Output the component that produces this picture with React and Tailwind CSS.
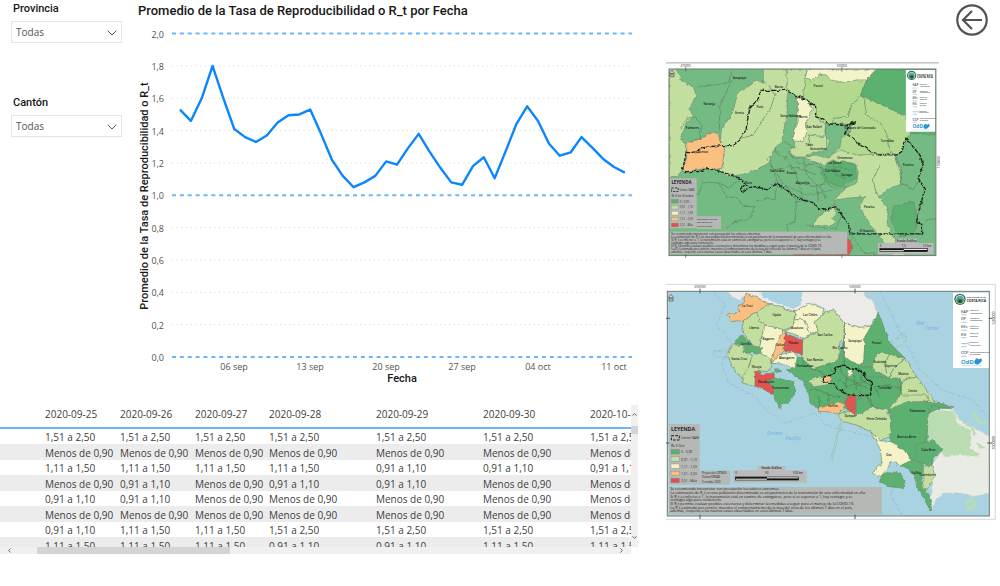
import { ChevronDown, ChevronLeft, ChevronRight, ChevronUp } from 'lucide-react';

const rt = [
  1.53, 1.46, 1.6, 1.8, 1.6, 1.41, 1.36, 1.33, 1.37, 1.45, 1.495, 1.5, 1.53, 1.38, 1.22, 1.12, 1.05, 1.08, 1.12, 1.21, 1.19,
  1.29, 1.38, 1.27, 1.17, 1.08, 1.065, 1.18, 1.235, 1.105, 1.27, 1.44, 1.55, 1.46, 1.32, 1.245, 1.265, 1.36, 1.295, 1.225, 1.175, 1.14,
];

const xTicks = ['06 sep', '13 sep', '20 sep', '27 sep', '04 oct', '11 oct'];
const yTicks = [0, 2, 4, 6, 8, 10, 12, 14, 16, 18, 20];

const M = 'Menos de 0,90';
const A = '0,91 a 1,10';
const B = '1,11 a 1,50';
const C = '1,51 a 2,50';

const dates = ['2020-09-25', '2020-09-26', '2020-09-27', '2020-09-28', '2020-09-29', '2020-09-30', '2020-10-01'];
const rows = [
  [C, C, C, C, C, C, C],
  [M, M, M, M, M, M, M],
  [B, B, B, B, A, A, A],
  [M, A, M, A, A, M, M],
  [A, A, M, M, M, M, M],
  [M, M, M, M, M, M, M],
  [A, B, B, C, C, C, C],
  [B, B, B, A, A, B, B],
];

const GREEN = '#74bb83';
const DARK = '#5bb06f';
const LIGHT = '#c3df9f';
const LIME = '#b3d98f';
const PALE = '#f4f3c8';
const ORANGE = '#fbc080';
const RED = '#e0524f';

const legend = [
  [DARK, '0 - 0,90'],
  [LIGHT, '0,91 - 1,10'],
  [PALE, '1,11 - 1,50'],
  [ORANGE, '1,51 - 2,50'],
  [RED, '2,51 - Máx'],
];

const notes = [
  'Se recomienda interpretar con precaución los valores extremos.',
  'La estimación de R_t en una población determinada es un parámetro de la transmisión de una enfermedad en ella.',
  'Si R_t es inferior a 1, la transmisión está en camino de extinguirse, pero si es superior a 1, hay contagio y se',
  'contagia algo para contenerlo.',
  'El R_t permite evaluar posibles escenarios y determinar las medidas a seguir para el manejo de la COVID-19.',
  'La R_t estimada por cantón, muestra el comportamiento de la tasa del virus de los últimos 7 días en el país,',
  'además, respecto a los nuevos casos observados en esos últimos 7 días.',
];

const gamRegions = [
  [LIGHT, '27,42 48,42 65,75 100,95 108,120 90,160 100,185 78,205 62,258 80,262 80,300 68,345 50,365 27,365'],
  [LIGHT, '310,42 440,42 470,60 512,90 520,205 505,240 510,290 480,306 400,306 385,285 345,275 340,305 325,325 290,345 250,358 205,365 180,350 195,275 180,265 185,220 215,180 235,110 265,95 290,75 310,85'],
  [LIME, '438,42 650,42 620,75 602,120 735,180 755,215 755,235 738,250 728,290 710,300 690,300 640,300 585,340 500,320 500,215 468,185 467,155 430,130'],
  [PALE, '438,42 655,42 625,75 590,75 550,82 510,75 500,60 478,58 455,75 438,68'],
  [DARK, '652,42 828,42 828,240 755,235 755,215 735,182 602,120 622,75'],
  [GREEN, '382,108 412,122 412,180 400,250 405,275 375,285 365,270 372,220 382,180'],
  [PALE, '412,130 428,128 450,140 457,165 440,200 440,235 430,260 400,258 402,225 415,200'],
  [GREEN, '497,205 575,208 570,230 545,250 540,275 505,310 480,318 440,300 500,285 510,260 495,240'],
  [GREEN, '345,275 370,262 395,272 385,290 410,310 470,305 520,330 575,305 600,330 600,390 440,420 350,380 330,310'],
  [DARK, '500,330 530,315 585,330 590,370 545,395 500,380 480,355'],
  [LIGHT, '430,305 470,300 500,308 540,285 590,300 705,296 720,350 725,385 690,400 655,425 685,460 680,500 705,560 740,602 700,602 640,520 600,460 605,440 615,425 560,430 530,435 518,455 528,430 555,400 590,385 595,350 585,325 520,318 490,330 465,322'],
  [LIGHT, '458,512 470,485 500,468 522,460 530,475 515,490 530,500 515,512'],
  [ORANGE, '80,265 110,255 150,235 175,235 180,265 195,275 190,310 185,340 160,345 140,340 75,350 68,345 80,310'],
  [DARK, '700,455 760,440 775,500 760,535 720,545 695,500'],
  [RED, '400,597 555,597 560,548 575,560 576,585 565,602 400,602'],
];

const gamLines = [
  '108,95 160,90 200,85 215,60 210,42', '215,72 200,110 180,150 178,230', '62,225 80,190 105,185 125,210 120,250 90,262',
  '303,75 325,90 345,120 330,165 300,205 280,240 245,250', '380,42 382,106', '345,275 355,300 375,310 390,300 410,320 440,330 480,325',
  '612,130 620,180 660,205 680,235 685,270 700,300', '602,120 575,150 565,185 520,190 518,208', '240,370 210,400 180,385 130,380 115,420 90,410 70,440',
  '180,385 200,430 230,425 250,455 285,455 270,490 225,500 200,520', '285,440 320,430 345,435 350,390', '385,405 410,440 440,435 460,445',
  '410,440 405,500 380,510 385,530', '320,310 345,350 375,390 405,425', '380,308 405,350 420,400 430,435', '430,310 440,360 470,390 475,440',
  '480,330 500,370 480,400 500,430', '520,320 525,360 560,370', '660,330 640,370 645,400 655,425', '705,300 725,345 725,385 760,405 780,370',
  '570,537 590,560 610,595 650,598', '785,510 800,495 828,490', '545,480 530,520 480,520 440,510', '450,270 445,240 490,245 500,215',
  '470,335 510,345 540,335 580,350', '430,385 460,395 500,385 530,400', '340,345 390,335 430,345 470,360',
];

const gamBorder =
  '78,292 90,293 110,290 130,278 150,275 190,272 215,272 235,262 258,225 265,180 270,160 295,130 303,106 380,106 412,125 430,130 455,145 467,155 467,185 485,192 510,207 560,212 590,200 572,205 555,235 580,250 600,270 650,300 710,300 725,290 738,250 755,270 780,300 790,330 775,370 795,400 785,440 770,500 788,512 785,537 570,537 565,505 545,480 530,455 480,465 465,445 430,435 405,425 380,405 350,385 325,405 285,395 265,398 250,412 240,402 258,392 240,370 190,352 165,345 140,340 120,350 75,350 68,345 72,325 78,292';

const gamPlaces = [
  [148, 150, 'Naranjo'], [238, 72, 'Sarapiquí'], [238, 176, 'Grecia'], [300, 158, 'Poás'], [97, 222, 'Palmares'], [130, 294, 'Atenas'],
  [357, 98, 'Barva'], [392, 185, 'Santa Bárbara'], [430, 190, 'Barva'], [463, 218, 'San Rafael'], [475, 97, 'Pococí'], [600, 223, 'Vázquez de Coronado'],
  [682, 260, 'Turrialba'], [745, 332, 'Paraíso'], [448, 272, 'Tibás'], [475, 284, 'Goicoechea'], [352, 350, 'Santa Ana'], [395, 356, 'Escazú'],
  [428, 386, 'Alajuelita'], [265, 388, 'Mora'], [555, 312, 'Oreamuno'], [525, 328, 'La Unión'], [518, 352, 'Curridabat'], [560, 362, 'Cartago'], [628, 460, 'Paraíso'], [620, 530, 'El Guarco'],
];

const countryRegions = [
  [DARK, '412,230 425,235 460,260 510,245 535,235 552,180 552,230 605,255 638,240 640,265 720,295 725,330 800,345 815,372 850,372 870,385 840,385 805,400 700,400 620,390 590,400 560,390 540,372 475,385 450,370 447,345 425,300 380,270 405,262'],
  [ORANGE, '258,40 285,50 330,72 320,85 290,95 275,105 250,125 235,122 215,125 200,105 240,95 232,82 248,70'],
  [LIGHT, '250,125 275,105 290,95 300,125 315,135 320,140 300,180 305,200 285,200 255,165 245,150'],
  [LIGHT, '290,95 330,72 405,95 400,140 370,150 315,135 300,125'],
  [PALE, '405,95 445,70 490,85 488,105 465,125 475,155 450,160 440,130 420,118 405,120'],
  [PALE, '405,120 425,118 440,135 455,165 430,175 395,160 375,155 400,140'],
  [LIGHT, '488,105 500,95 520,90 553,130 553,175 540,185 535,240 510,250 460,265 425,235 428,180 455,165 475,155 465,125'],
  [PALE, '315,135 368,148 355,190 335,240 310,235 298,205 305,175'],
  [ORANGE, '368,150 380,155 375,210 350,235 333,250 350,190'],
  [RED, '375,160 428,180 427,225 400,215 372,212'],
  [DARK, '245,165 265,180 285,200 305,205 300,218 250,218 255,195 218,190'],
  [LIGHT, '215,195 250,195 250,218 278,225 255,290 245,295 215,260 205,225'],
  [LIGHT, '278,225 300,220 330,235 335,260 325,275 290,272 285,320 245,308 250,290 265,265'],
  [DARK, '340,278 348,292 375,300 400,305 408,330 400,350 385,370 370,370 358,385 345,360 335,335 320,305'],
  [RED, '285,275 300,272 300,285 340,278 348,292 320,305 340,320 340,345 315,330 285,318'],
  [PALE, '335,250 355,225 400,215 412,230 405,265 365,252'],
  [PALE, '553,130 600,142 638,138 615,170 612,240 600,255 565,240 552,230'],
  [DARK, '638,130 655,98 675,150 690,190 735,235 670,218 635,260 600,260 612,240 615,170'],
  [LIGHT, '650,222 670,218 735,235 770,290 800,330 825,365 790,370 750,370 720,350 725,330 720,295 690,295 635,265'],
  [DARK, '600,290 720,295 720,350 705,372 690,400 640,380 600,350'],
  [LIGHT, '447,300 480,290 515,290 500,315 460,320'],
  [ORANGE, '490,292 510,286 516,295 508,306 490,305'],
  [PALE, '560,270 575,268 580,285 565,290'],
  [LIGHT, '705,365 720,345 800,345 805,363 740,368 690,395 695,375'],
  [DARK, '690,390 740,365 815,368 850,372 880,385 845,382 815,375 805,400 800,500 770,540 740,540 690,480'],
  [LIGHT, '540,400 590,390 630,380 680,390 695,420 690,470 660,482 630,455 590,435 550,425 535,410'],
  [ORANGE, '475,382 500,375 530,368 555,368 550,385 535,402 505,395 475,395'],
  [RED, '565,348 588,345 587,405 565,390 555,365'],
  [DARK, '588,360 620,350 635,380 600,402 588,400'],
  [PALE, '632,455 660,482 690,485 740,515 755,545 725,555 690,545 685,565 660,590 640,580 650,560 665,550 662,510'],
  [DARK, '765,495 820,480 848,510 820,535 815,560 770,545'],
  [DARK, '722,555 760,540 790,550 785,600 795,630 812,655 815,692 808,690 790,650 770,620 765,590 750,570'],
  [DARK, '662,585 690,575 720,580 735,600 730,625 690,620 660,605'],
  [LIGHT, '790,560 815,555 825,590 800,630 785,620 792,595'],
  [DARK, '343,267 355,266 362,275 348,277'],
];

const countryBorder =
  '490,292 510,286 520,280 530,262 552,255 565,262 580,268 590,265 610,280 620,298 635,305 632,345 600,347 565,345 540,330 520,312 490,305 490,292';

const countryLines = [
  '553,130 553,250', '425,235 440,260 470,268 500,290', '447,330 480,330 510,345 540,350', '470,345 480,365 475,385', '510,345 505,372',
  '540,250 545,280 570,300 600,310 630,300', '560,290 555,330', '580,285 590,330', '600,270 605,300 640,320 660,350', '640,320 690,315 720,325',
  '735,235 700,265 690,295', '770,290 730,300 720,330', '690,222 675,245 680,280', '500,250 515,275 530,262', '620,345 640,380', '535,300 560,318 590,312 625,325',
];

const countryPlaces = [
  [262, 82, 'La Cruz'], [350, 108, 'Upala'], [282, 146, 'Liberia'], [450, 108, 'Los Chiles'], [412, 146, 'Guatuso'], [495, 168, 'San Carlos'],
  [325, 180, 'Bagaces'], [360, 198, 'Cañas'], [400, 192, 'Tilarán'], [258, 194, 'Carrillo'], [238, 240, 'Santa Cruz'], [290, 265, 'Nicoya'],
  [380, 238, 'Abangares'], [435, 262, 'Puntarenas'], [585, 187, 'Sarapiquí'], [650, 193, 'Pococí'], [660, 250, 'Guácimo'], [692, 262, 'Siquirres'],
  [730, 286, 'Matina'], [758, 336, 'Limón'], [674, 326, 'Turrialba'], [362, 328, 'Puntarenas'], [318, 308, 'Nandayure'], [518, 380, 'Parrita'],
  [570, 410, 'Quepos'], [650, 420, 'Pérez Zeledón'], [772, 396, 'Talamanca'], [740, 473, 'Buenos Aires'], [805, 512, 'Coto Brus'], [686, 527, 'Osa'],
  [768, 582, 'Golfito'], [803, 588, 'Corredores'], [540, 206, 'Río Cuarto'], [465, 242, 'San Ramón'],
];

function Filter({ id, label }) {
  return (
    <div className="flex flex-col gap-1">
      <label htmlFor={id} className="pl-0.5 text-[11px] leading-4 font-medium text-neutral-900 font-['Roboto',sans-serif]">
        {label}
      </label>
      <div className="relative">
        <select
          id={id}
          className="block w-full h-[22px] pl-1 pr-5 appearance-none rounded-none border border-neutral-200 bg-white text-[10px] text-neutral-600"
        >
          <option>Todas</option>
        </select>
        <ChevronDown size={16} strokeWidth={1.5} className="absolute right-0.5 top-1 text-neutral-600 pointer-events-none" />
      </div>
    </div>
  );
}

function RtChart() {
  const y = v => 357 - v * 161.7;
  const line = rt.map((v, i) => `${180 + i * 10.85},${y(v)}`).join(' ');
  return (
    <svg viewBox="130 22 508 366" className="block w-full" role="img" aria-label="Tasa de reproducibilidad por fecha">
      {yTicks.map(t => (
        <g key={t}>
          <line
            x1="172" x2="632" y1={y(t / 10)} y2={y(t / 10)}
            stroke={t % 10 ? '#d0d0d0' : '#6bb5fb'}
            strokeWidth={t % 10 ? 1 : 2}
            strokeDasharray={t % 10 ? '1 3.7' : '4 3.87'}
          />
          <text x="164" y={y(t / 10) + 4} textAnchor="end" className="text-[9px] fill-neutral-600">
            {(t / 10).toFixed(1).replace('.', ',')}
          </text>
        </g>
      ))}
      {xTicks.map((t, i) => (
        <text key={t} x={234 + i * 76} y="370" textAnchor="middle" className="text-[9px] fill-neutral-600">{t}</text>
      ))}
      <polyline points={line} fill="none" stroke="#0d86fb" strokeWidth="2.4" strokeLinejoin="round" />
      <text x="402" y="382" textAnchor="middle" className="text-[11px] font-medium fill-neutral-900 font-['Roboto',sans-serif]">Fecha</text>
      <text
        transform="translate(148 196) rotate(-90)"
        textAnchor="middle"
        className="text-[11px] font-medium fill-neutral-900 font-['Roboto',sans-serif]"
      >
        Promedio de la Tasa de Reproducibilidad o R_t
      </text>
    </svg>
  );
}

function Matrix() {
  return (
    <div className="mt-[17px]">
      <div className="flex">
        <div className="flex-1 min-w-0 h-[142px] overflow-hidden">
          <table className="w-[700px] table-fixed border-collapse text-[10px] leading-[14px] text-neutral-700 whitespace-nowrap">
            <colgroup>
              <col className="w-[45px]" />
              <col className="w-[75px]" />
              <col className="w-[75px]" />
              <col className="w-[74px]" />
              <col className="w-[107px]" />
              <col className="w-[107px]" />
              <col className="w-[107px]" />
              <col className="w-[110px]" />
            </colgroup>
            <thead>
              <tr className="h-[23px] border-b-2 border-[#6bb5fb]">
                <td />
                {dates.map(d => (
                  <th key={d} scope="col" className="p-0 pb-1 text-left font-normal">{d}</th>
                ))}
              </tr>
            </thead>
            <tbody>
              {rows.map((r, i) => (
                <tr key={i} className={i % 2 ? 'h-4 bg-[#ececec]' : 'h-[15px]'}>
                  <td className="p-0" />
                  {r.map((c, j) => (
                    <td key={j} className={i % 2 ? 'p-0 pt-0.5' : 'p-0 pt-px'}>{c}</td>
                  ))}
                </tr>
              ))}
            </tbody>
          </table>
        </div>
        <div className="w-[7px] flex flex-col justify-between bg-[#f0f0f0] text-neutral-600">
          <div>
            <button aria-label="Subir" className="block pt-1.5"><ChevronUp size={7} strokeWidth={3} /></button>
            <div className="mt-2 h-2 bg-neutral-300" />
          </div>
          <button aria-label="Bajar" className="block pb-1.5"><ChevronDown size={7} strokeWidth={3} /></button>
        </div>
      </div>
      <div className="mr-[7px] h-[7px] flex items-center bg-[#f0f0f0] text-neutral-600">
        <button aria-label="Izquierda" className="w-[37px] pl-1.5"><ChevronLeft size={7} strokeWidth={3} /></button>
        <div className="w-[193px] h-full bg-neutral-300" />
        <button aria-label="Derecha" className="ml-auto pr-1.5"><ChevronRight size={7} strokeWidth={3} /></button>
      </div>
    </div>
  );
}

// roughens the region outlines so that borders and coasts look natural
function Terrain({ id }) {
  return (
    <filter id={id} x="0" y="0" width="100%" height="100%">
      <feTurbulence type="fractalNoise" baseFrequency="0.07" numOctaves="2" seed="4" />
      <feDisplacementMap in="SourceGraphic" scale="11" xChannelSelector="R" yChannelSelector="G" />
    </filter>
  );
}

function Places({ items }) {
  return items.map(([x, y, name]) => (
    <text key={`${name}-${x}`} x={x} y={y} textAnchor="middle" className="text-[9px] font-semibold fill-neutral-900">{name}</text>
  ));
}

function Frame({ x, y, w, h }) {
  return <rect x={x} y={y} width={w} height={h} fill="none" stroke="#6b7a72" strokeWidth="3" />;
}

function House({ x, y }) {
  return (
    <g transform={`translate(${x} ${y})`} stroke="#444" strokeWidth="2" fill="#cfd6cf">
      <path d="M0 8 6 1l6 7v13H0Z" />
      <path d="M3 17v-7l3 4 3-4v7" fill="none" />
    </g>
  );
}

function Institutions({ x, y, scale }) {
  const items = [
    ['EAP', 'Escuela de', 'Administración', 50], ['IIP', 'Instituto de', 'Investigaciones', 73], ['EEs', 'Escuela de', 'Estadística', 97],
    ['EG', 'Escuela de', 'Geografía', 119], ['', 'Escuela de', 'Salud Pública', 146], ['CCP', 'Centro Centroamericano', 'de Población', 175],
  ];
  return (
    <g transform={`translate(${x} ${y}) scale(${scale})`}>
      <rect width="107" height="226" fill="#fff" />
      <circle cx="21" cy="20" r="17" fill="#3c7150" />
      <circle cx="21" cy="20" r="13" fill="#e6eee6" />
      <circle cx="21" cy="20" r="11" fill="#5aa6c9" />
      <path d="M10 23c5-8 9-9 12-3 3-4 7-3 10 2-2 7-6 10-11 10s-9-3-11-9Z" fill="#3f9a51" />
      <path d="M15 27c2-8 9-9 13-2l-4 6h-6Z" fill="#314b36" />
      <text x="41" y="17" className="text-[7px] font-bold fill-neutral-700">UNIVERSIDAD DE</text>
      <text x="41" y="28" className="text-[10px] font-bold fill-neutral-800">COSTA RICA</text>
      {items.map(([abbr, a, b, top]) => (
        <g key={top}>
          <text x="24" y={top + 10} className="text-[12px] font-semibold fill-neutral-600">{abbr}</text>
          <line x1="25" x2="41" y1={top + 16} y2={top + 16} stroke="#72b6df" strokeWidth="2" />
          <text x="51" y={top + 6} className="text-[5px] font-semibold fill-neutral-700">{a}</text>
          <text x="51" y={top + 13} className="text-[5px] font-semibold fill-neutral-700">{b}</text>
        </g>
      ))}
      <path d="M25 153h20M48 149v9" stroke="#8a8f94" strokeWidth="2" />
      <text x="24" y="214" className="text-[18px] font-bold fill-[#3b96c8]">OdD</text>
      <path d="M64 205l6-8 8 3 7-3 2 7-6 8-8 4-8-3Z" fill="#2b93cf" />
      <line x1="24" x2="86" y1="219" y2="219" stroke="#9bc5de" strokeWidth="1.5" />
    </g>
  );
}

function Legend({ x, y, w, h, step, date }) {
  const s = step / 21.5;
  return (
    <g>
      <rect x={x} y={y} width={w} height={h} fill="#b6b8b6" />
      <rect x={x + w - 1} y={y + h - (s > 0.9 ? 42 : 36)} width={s > 0.9 ? 93 : 74} height={s > 0.9 ? 42 : 38} fill="#b6b8b6" />
      <g transform={`translate(${x} ${y}) scale(${s})`}>
        <text x="5" y="20" className="text-[16px] font-bold fill-neutral-800">LEYENDA</text>
        <rect x="6" y="35" width="24" height="13" fill="none" stroke="#222" strokeWidth="3" strokeDasharray="8 4" />
        <text x="35" y="45" className="text-[10px] font-medium fill-neutral-800">Límite GAM</text>
        <text x="5" y="68" className="text-[11px] font-medium fill-neutral-800">{date}</text>
        {legend.map(([color, name], i) => (
          <g key={name}>
            <rect x="5" y={77 + i * 21.5} width="25" height="13" fill={color} stroke="#777" />
            <text x="35" y={88 + i * 21.5} className="text-[10px] font-medium fill-neutral-800">{name}</text>
          </g>
        ))}
        <text x="98" y="151" className="text-[8px] font-medium fill-neutral-900">Proyección CRTM05</text>
        <text x="98" y="161" className="text-[8px] font-medium fill-neutral-900">Datum SIRGAS</text>
        <text x="98" y="177" className="text-[8px] font-medium fill-neutral-900">3 octubre 2020</text>
      </g>
    </g>
  );
}

function Notes({ x, y, w, h, scale }) {
  return (
    <g>
      <rect x={x} y={y} width={w} height={h} fill="#b6b8b6" />
      <g transform={`translate(${x + 4} ${y + 10}) scale(${scale})`}>
        {notes.map((n, i) => (
          <text key={n} y={i * 11} className="text-[11px] font-medium fill-neutral-900">{n}</text>
        ))}
      </g>
    </g>
  );
}

function ScaleBar({ x, y, w, h, labels }) {
  return (
    <g>
      <rect x={x} y={y} width={w} height={h} fill="#b9bab9" />
      <rect x={x + w / 3} y={y - 13} width={w * 0.38} height="13" fill="#b9bab9" />
      <text x={x + w * 0.52} y={y - 3} textAnchor="middle" className="text-[9px] font-semibold fill-neutral-800">Escala Gráfica</text>
      {labels.map((l, i) => (
        <text key={l} x={x + 8 + i * w * 0.42} y={y + 11} textAnchor="middle" className="text-[9px] fill-neutral-900">{l}</text>
      ))}
      <rect x={x + 6} y={y + h - 17} width={w * 0.86} height="9" fill="#fff" stroke="#111" strokeWidth="2" />
      <rect x={x + 6} y={y + h - 17} width={w * 0.43} height="5" fill="#111" />
      <rect x={x + 6 + w * 0.43} y={y + h - 13} width={w * 0.43} height="5" fill="#111" />
    </g>
  );
}

function Regions({ items }) {
  return items.map(([fill, points]) => (
    <polygon key={points} points={points} fill={fill} stroke="#6f8b70" strokeWidth="2" />
  ));
}

function GamMap() {
  return (
    <svg viewBox="18 21 822 591" className="block w-[82%]" role="img" aria-label="Mapa del Gran Área Metropolitana">
      <defs>
        <Terrain id="gam-terrain" />
        <clipPath id="gam-clip"><rect x="27" y="42" width="801" height="560" /></clipPath>
      </defs>
      <rect x="18" y="21" width="819" height="5" fill="#c9c9c9" />
      <g clipPath="url(#gam-clip)">
        <rect x="27" y="42" width="801" height="560" fill={GREEN} />
        <g filter="url(#gam-terrain)">
          <rect x="0" y="20" width="860" height="620" fill="none" />
          <Regions items={gamRegions} />
          {gamLines.map(p => (
            <polyline key={p} points={p} fill="none" stroke="#5c8068" strokeWidth="2" />
          ))}
          <polyline points={gamBorder} fill="none" stroke="#1c241e" strokeWidth="4" strokeDasharray="13 3" />
        </g>
        <Places items={gamPlaces} />
      </g>
      <Frame x={27} y={42} w={801} h={560} />
      <path d="M77 36v14M546 36v14M77 597v12M546 597v12" stroke="#555" strokeWidth="2" />
      <text x="77" y="36" textAnchor="middle" className="text-[9px] font-medium fill-neutral-800">470000</text>
      <text x="546" y="36" textAnchor="middle" className="text-[9px] font-medium fill-neutral-800">500000</text>
      <text transform="translate(839 322) rotate(-90)" textAnchor="middle" className="text-[9px] fill-neutral-800">1100000</text>
      <House x={30} y={44} />
      <Institutions x={738} y={45} scale={0.82} />
      <Legend x={30} y={370} w={80} h={150} step={17.8} date="Rt 3 de Octubre" />
      <Notes x={30} y={530} w={532} h={68} scale={0.82} />
      <ScaleBar x={654} y={564} w={166} h={34} labels={['0', '7,5', '15 km']} />
    </svg>
  );
}

function CountryMap() {
  return (
    <svg viewBox="18 9 1002 714" className="block w-full" role="img" aria-label="Mapa de Costa Rica por cantón">
      <defs>
        <Terrain id="cr-terrain" />
        <clipPath id="cr-clip"><rect x="22" y="34" width="966" height="674" /></clipPath>
      </defs>
      <path d="M18 13h988v705H18" fill="none" stroke="#d6d6d6" strokeWidth="3" />
      <g clipPath="url(#cr-clip)">
        <rect x="22" y="34" width="966" height="674" fill="#a9d3e1" />
        <g filter="url(#cr-terrain)">
          <rect x="0" y="0" width="1020" height="740" fill="none" />
          <path
            d="M160 34l35 40-25 60 45 55-30 60 20 60 80 40 30 40 60 40 90-30 40 40 130 30 70 50 10 90-25 30 30 60 90 35 60 5M660 34l75 150 50 90 60 55 95 30 45 55"
            fill="none" stroke="#98b1d0" strokeWidth="2" strokeDasharray="14 4"
          />
          <polygon points="195,30 225,55 240,62 258,40 285,50 330,72 405,95 450,70 490,82 500,95 520,90 553,130 600,142 650,130 652,95 640,65 615,45 612,30" fill="#edebe7" stroke="#c9c5c2" strokeWidth="2" />
          <polygon points="285,20 310,52 360,74 400,86 422,75 428,20" fill="#a9d3e1" />
          <polygon points="805,395 845,382 880,390 900,420 940,440 990,470 990,640 940,650 900,638 850,640 830,655 815,692 812,655 820,600 815,555 848,510 805,480" fill="#e9ebe5" stroke="#c5cec5" strokeWidth="2" />
          <polygon points="805,400 845,390 880,395 895,430 935,455 930,500 960,530 900,525 848,530 845,505 805,482" fill="#b9dcb3" />
          <path d="M905 425l30 15 12 25M940 400l15 25 20 5M950 490l20 15M920 670l18-12 8 20-22 8Z" fill="none" stroke="#b9dcb3" strokeWidth="8" />
          <path d="M545 430l-28 108-5-3 29-105ZM163 212h38v18h-38ZM695 185l35-25 12 18-35 28Z" fill="none" stroke="#8fbfae" strokeWidth="2" />
          <Regions items={countryRegions} />
          {countryLines.map(p => (
            <polyline key={p} points={p} fill="none" stroke="#4d7a58" strokeWidth="2" />
          ))}
          <polyline points={countryBorder} fill="none" stroke="#141a16" strokeWidth="4" strokeDasharray="12 2" />
        </g>
        <Places items={countryPlaces} />
        <g className="text-[14px] italic fill-[#6fb2dc]">
          <text x="768" y="135">Mar</text>
          <text x="795" y="151">Caribe</text>
          <text x="320" y="464">Océano</text>
          <text x="376" y="480">Pacífico</text>
        </g>
      </g>
      <Frame x={22} y={34} w={966} h={674} />
      <path d="M120 26v14M585 26v14M120 703v14M585 703v14M16 115h14M16 489h14M982 115h14M982 489h14" stroke="#555" strokeWidth="3" />
      <text x="120" y="25" textAnchor="middle" className="text-[10px] font-medium fill-neutral-800">250000</text>
      <text x="585" y="25" textAnchor="middle" className="text-[10px] font-medium fill-neutral-800">500000</text>
      <text transform="translate(1004 115) rotate(-90)" textAnchor="middle" className="text-[10px] fill-neutral-800">1200000</text>
      <text transform="translate(1004 488) rotate(-90)" textAnchor="middle" className="text-[10px] fill-neutral-800">1000000</text>
      <House x={27} y={42} />
      <Institutions x={879} y={38} scale={1} />
      <Legend x={28} y={432} w={91} h={182} step={21.5} date="Rt 3 Oct" />
      <Notes x={27} y={621} w={639} h={82} scale={1} />
      <ScaleBar x={220} y={571} w={220} h={37} labels={['0', '50', '100 km']} />
    </svg>
  );
}

export default function App() {
  return (
    <main className="grid grid-cols-[638fr_362fr] items-start min-h-screen bg-white overflow-hidden font-['Open_Sans','Noto_Sans',sans-serif]">
      <section className="min-w-0">
        <div className="flex">
          <aside className="w-[130px] shrink-0 flex flex-col gap-[52px] pt-px pl-[11px] pr-2">
            <Filter id="provincia" label="Provincia" />
            <Filter id="canton" label="Cantón" />
          </aside>
          <div className="flex-1 min-w-0">
            <h1 className="h-[22px] pl-2 text-[13px] leading-[22px] font-medium text-neutral-900 whitespace-nowrap font-['Roboto',sans-serif]">
              Promedio de la Tasa de Reproducibilidad o R_t por Fecha
            </h1>
            <RtChart />
          </div>
        </div>
        <Matrix />
      </section>
      <section className="min-w-0 flex flex-col pl-7">
        <button aria-label="Volver" className="self-end mt-1 mr-3 mb-[26px] text-neutral-600">
          <svg width="32" height="32" viewBox="0 0 32 32" fill="none" stroke="currentColor" strokeWidth="2.2">
            <circle cx="16" cy="16" r="14.7" />
            <path d="M26 16H7M16 7l-9 9 9 9" />
          </svg>
        </button>
        <GamMap />
        <div className="mt-6">
          <CountryMap />
        </div>
      </section>
    </main>
  );
}
